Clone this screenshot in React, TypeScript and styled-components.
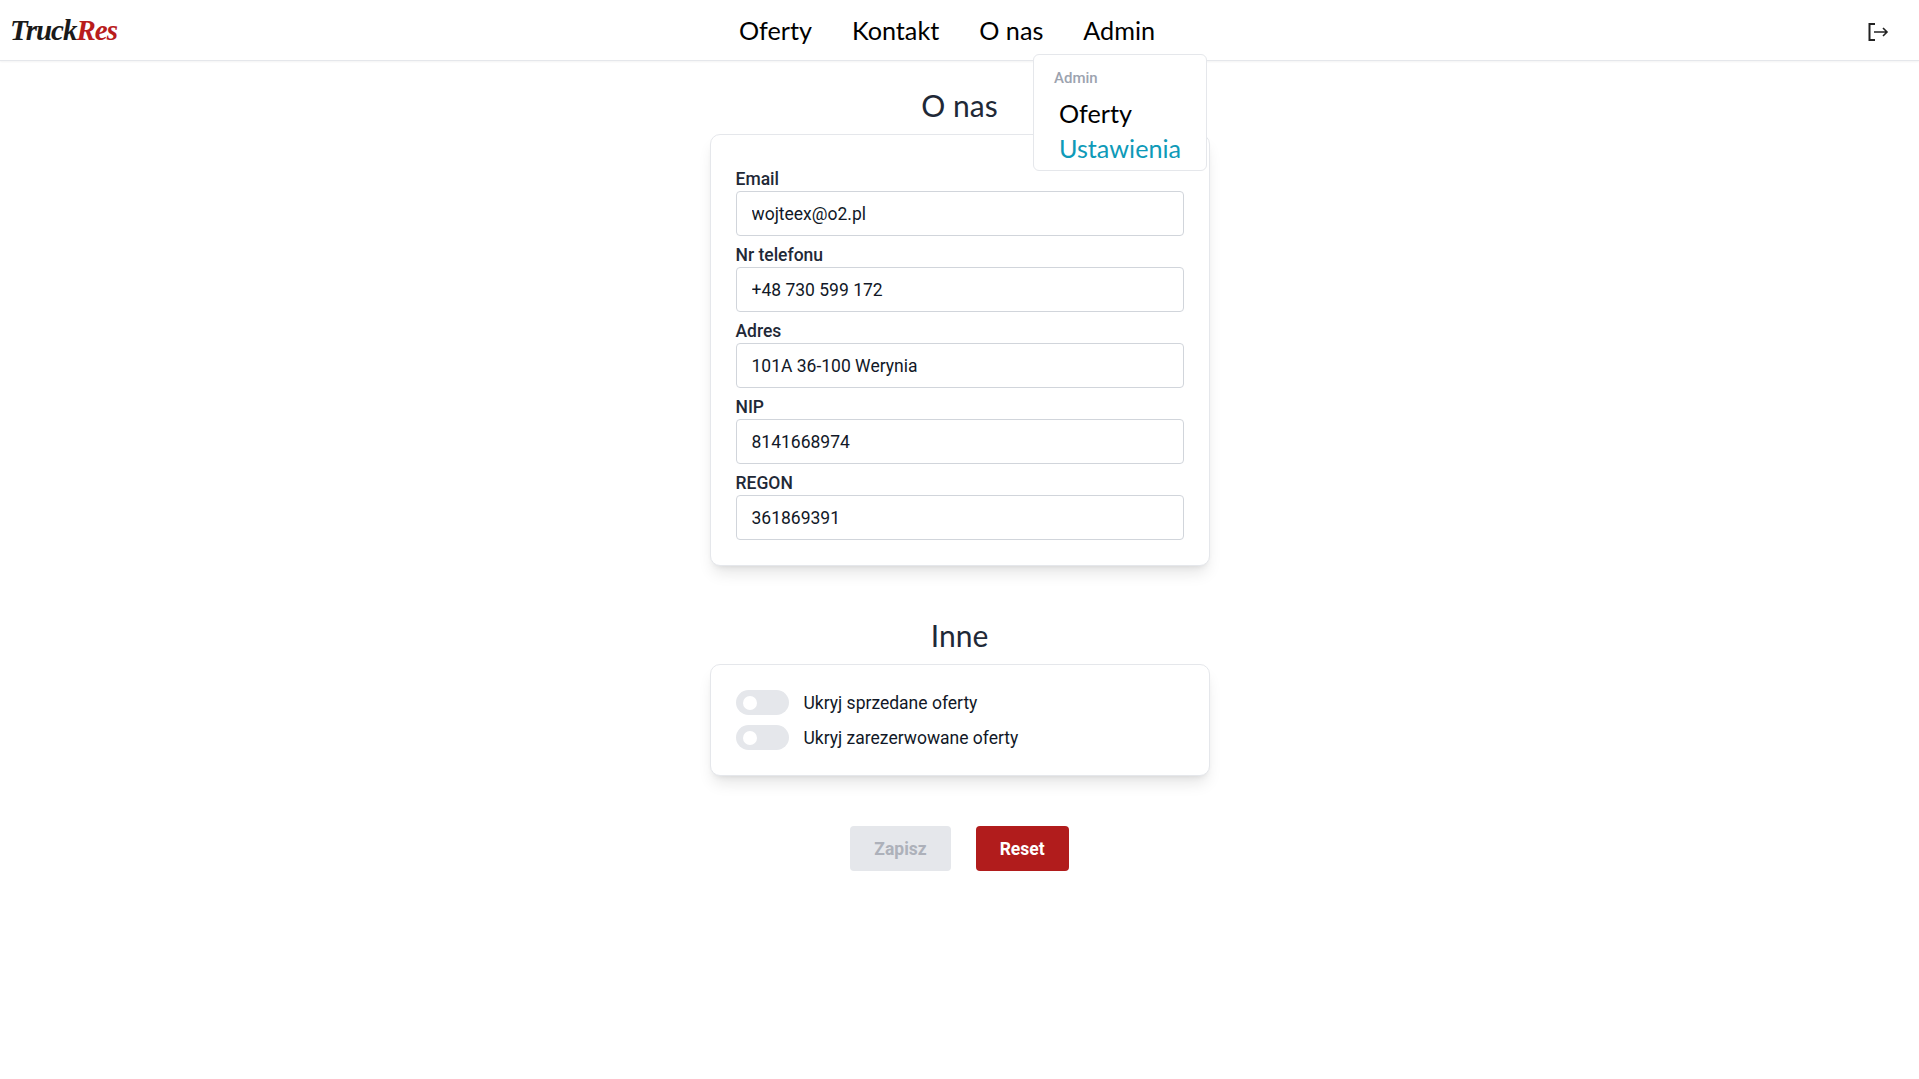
import { createGlobalStyle, styled } from "styled-components";

const GlobalStyle = createGlobalStyle`
  * { box-sizing: border-box; }
  html, body { margin: 0; padding: 0; background: #fff; }
  body { font-family: Roboto, "Liberation Sans", sans-serif; color: #111827; }
`;

const Header = styled.header`
  position: relative;
  display: grid;
  grid-template-columns: 1fr auto 1fr;
  align-items: center;
  height: 61px;
  padding: 0 29px 0 4px;
  border-bottom: 1px solid #e5e7eb;
  box-shadow: 0 1px 2px rgba(0, 0, 0, 0.05);
`;

const Logo = styled.a`
  margin-left: 6px;
  font-family: "Liberation Serif", serif;
  font-style: italic;
  font-weight: 700;
  font-size: 29px;
  letter-spacing: -1px;
  color: #1a1a1a;

  span {
    color: #b91c1c;
  }
`;

const Nav = styled.nav`
  display: flex;
  gap: 40px;
`;

const NavItem = styled.a`
  position: relative;
  font-family: Lato, sans-serif;
  font-size: 25.2px;
  line-height: 32px;
  color: #000;
`;

const Dropdown = styled.div`
  position: absolute;
  top: 54px;
  left: 1033px;
  width: 174px;
  height: 117px;
  padding: 13px 20px;
  background: #fff;
  border: 1px solid #e5e7eb;
  border-radius: 6px;
  z-index: 10;
`;

const DropdownTitle = styled.div`
  font-size: 15px;
  font-weight: 500;
  line-height: 20px;
  color: #9ca3af;
  margin-bottom: 8px;
`;

const DropdownLink = styled.a<{ $active?: boolean }>`
  display: block;
  padding-left: 5px;
  font-family: Lato, sans-serif;
  font-size: 25.2px;
  line-height: 35px;
  color: ${(p) => (p.$active ? "#0e9ab8" : "#000")};
`;

const LogoutIcon = styled.svg`
  justify-self: end;
  width: 24px;
  height: 24px;
  margin-top: 4px;
  color: #222;
`;

const Main = styled.main`
  display: flex;
  flex-direction: column;
  align-items: center;
`;

const Title = styled.h2<{ $top: number }>`
  margin: ${(p) => p.$top}px 0 11px;
  font-family: Lato, sans-serif;
  font-size: 30px;
  font-weight: 400;
  line-height: 36px;
  color: #1f2937;
`;

const Card = styled.section<{ $top: number; $bottom: number }>`
  width: 500px;
  padding: ${(p) => p.$top}px 25px ${(p) => p.$bottom}px;
  background: #fff;
  border: 1px solid #e5e7eb;
  border-radius: 10px;
  box-shadow: 0 10px 15px -3px rgba(0, 0, 0, 0.1), 0 4px 6px -4px rgba(0, 0, 0, 0.1);
`;

const Field = styled.label`
  display: block;
  height: 76px;

  &:last-child {
    height: 70px;
  }
`;

const FieldLabel = styled.span`
  display: block;
  font-size: 17.5px;
  font-weight: 500;
  line-height: 24px;
  color: #1f2937;
`;

const Input = styled.input`
  display: block;
  width: 100%;
  height: 45px;
  padding: 0 15px;
  font-family: Roboto, sans-serif;
  font-size: 17.5px;
  color: #111827;
  background: #fff;
  border: 1px solid #d1d5db;
  border-radius: 4px;
  outline: none;
`;

const ToggleRow = styled.div`
  display: flex;
  align-items: center;
  gap: 15px;
  height: 35px;
  font-size: 17.5px;
  color: #111827;
`;

const Track = styled.span`
  position: relative;
  width: 53px;
  height: 25px;
  background: #e5e7eb;
  border-radius: 13px;

  &::after {
    content: "";
    position: absolute;
    top: 6px;
    left: 7px;
    width: 14px;
    height: 14px;
    background: #fff;
    border-radius: 50%;
  }
`;

const Actions = styled.div`
  display: flex;
  gap: 25px;
  margin-top: 50px;
`;

const Button = styled.button<{ $variant: "muted" | "danger" }>`
  height: 45px;
  padding: 0 24px;
  font-family: Roboto, sans-serif;
  font-size: 17.5px;
  font-weight: 700;
  border: 0;
  border-radius: 4px;
  background: ${(p) => (p.$variant === "danger" ? "#b11c1c" : "#e5e7eb")};
  color: ${(p) => (p.$variant === "danger" ? "#fff" : "#adb1ba")};
`;

const fields = [
  ["Email", "wojteex@o2.pl"],
  ["Nr telefonu", "+48 730 599 172"],
  ["Adres", "101A 36-100 Werynia"],
  ["NIP", "8141668974"],
  ["REGON", "361869391"],
];

const App = () => {
  return (
    <>
      <GlobalStyle />
      <Header>
        <Logo>
          Truck<span>Res</span>
        </Logo>
        <Nav>
          <NavItem>Oferty</NavItem>
          <NavItem>Kontakt</NavItem>
          <NavItem>O nas</NavItem>
          <NavItem>Admin</NavItem>
        </Nav>
        <LogoutIcon viewBox="0 0 24 24" fill="none" stroke="currentColor" strokeWidth="2">
          <path d="M9 4H3.5v16H9" />
          <path d="M8 12h13M17 8l4 4-4 4" strokeWidth="1.6" />
        </LogoutIcon>
        <Dropdown>
          <DropdownTitle>Admin</DropdownTitle>
          <DropdownLink>Oferty</DropdownLink>
          <DropdownLink $active>Ustawienia</DropdownLink>
        </Dropdown>
      </Header>
      <Main>
        <Title $top={26}>O nas</Title>
        <Card $top={32} $bottom={24}>
          {fields.map(([label, value]) => (
            <Field key={label}>
              <FieldLabel>{label}</FieldLabel>
              <Input readOnly value={value} />
            </Field>
          ))}
        </Card>
        <Title $top={51}>Inne</Title>
        <Card $top={20} $bottom={20}>
          <ToggleRow>
            <Track />
            Ukryj sprzedane oferty
          </ToggleRow>
          <ToggleRow>
            <Track />
            Ukryj zarezerwowane oferty
          </ToggleRow>
        </Card>
        <Actions>
          <Button $variant="muted" disabled>
            Zapisz
          </Button>
          <Button $variant="danger">Reset</Button>
        </Actions>
      </Main>
    </>
  );
};
export default App;
